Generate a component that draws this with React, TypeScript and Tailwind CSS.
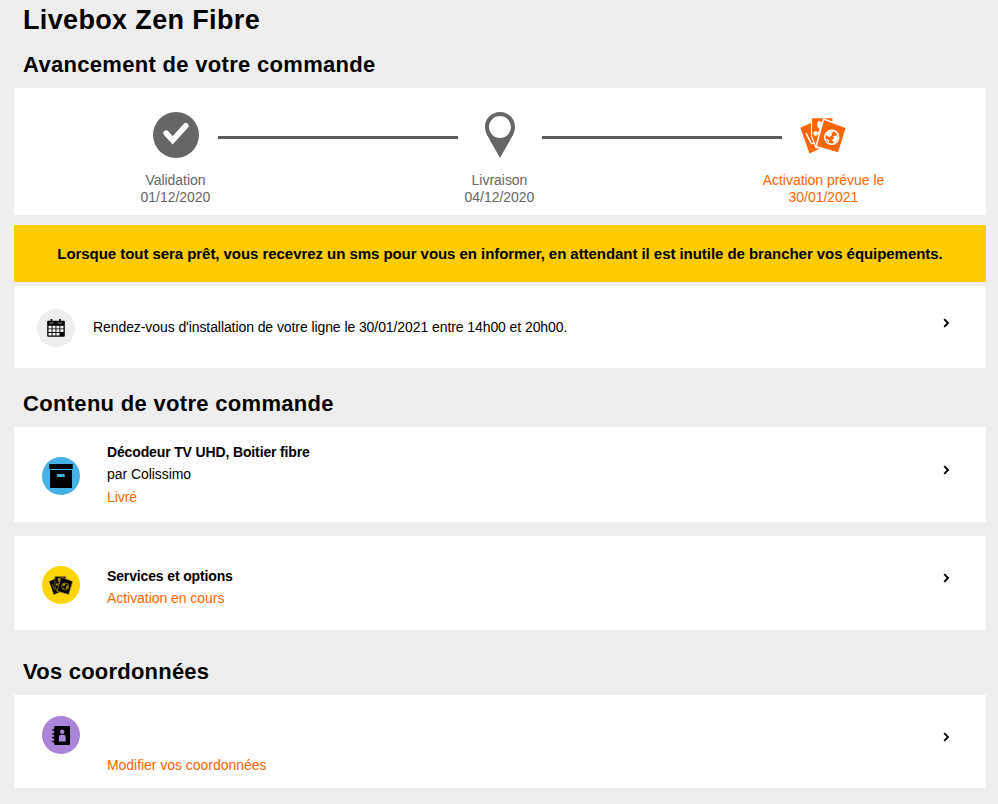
import React from 'react';

interface IconProps {
  className?: string;
}

const CheckCircleIcon: React.FC<IconProps> = ({ className }) => (
  <svg className={className} viewBox="0 0 46 46" fill="none">
    <circle cx="23" cy="23" r="23" fill="#666666" />
    <path
      d="M13.2 21.2L19.6 28.4L32.8 13.800"
      stroke="#ffffff"
      strokeWidth="5.600"
      strokeLinecap="round"
      strokeLinejoin="miter"
    />
  </svg>
);

const PinIcon: React.FC<IconProps> = ({ className }) => (
  <svg className={className} viewBox="0 0 30 46">
    <path
      fill="#666666"
      fillRule="evenodd"
      d="M15 0C6.7 0 0 6.6 0 14.8C0 18.5 1.3 21.7 3 24.8L15 46L27 24.8C28.700 21.7 30 18.5 30 14.8C30 6.600 23.300 0 15 0ZM15 4A11 11 0 1 1 15 26A11 11 0 1 1 15 4Z"
    />
  </svg>
);

// Three fanned cards: laptop, phone and globe
const CardsIcon: React.FC<IconProps & { gap: string }> = ({ className, gap }) => (
  <svg className={className} viewBox="0 0 47 37">
    <g fill="currentColor">
      <path d="M0.300 10.800L12 5.500L20 31.500L9.500 36.500Z" />
      <path
        d="M6 16L11 25.800Q12 27.500 16 25.500M12 12.500V15"
        fill="none"
        stroke={gap}
        strokeWidth="1.500"
      />
      <path d="M11.500 0.700H33V31H16L11.500 19Z" stroke={gap} strokeWidth="1.200" />
      <path
        d="M19.500 4C18.300 7.500 19 10.500 20.500 12C20.500 14.500 18 16.500 15.500 17"
        fill="none"
        stroke={gap}
        strokeWidth="1.800"
      />
      <ellipse cx="19.600" cy="7.800" rx="2.400" ry="3.400" fill={gap} />
      <ellipse cx="15.600" cy="16.500" rx="2.200" ry="2.400" fill={gap} />
      <path d="M23.500 2L46.500 10.500L38.500 36.300L16 29.500Z" stroke={gap} strokeWidth="1.500" />
      <circle cx="31.700" cy="20.300" r="7" fill="none" stroke={gap} strokeWidth="1.500" />
      <path
        d="M25.500 17.500L28.500 14.500L34 14.200L31.500 16.500L32 18L29.500 20L28 19.500ZM33 19.500L37.500 18L38 22L35 25.700L31.500 23.500L34 21.500ZM26 21.500L29.500 23.500L28.500 25.500Z"
        fill={gap}
      />
    </g>
  </svg>
);

const CalendarIcon: React.FC<IconProps> = ({ className }) => (
  <svg className={className} viewBox="0 0 18 18">
    <rect x="0.200" y="1.800" width="17.600" height="16" rx="1" fill="#000000" />
    <path d="M4.500 0V4M12.900 0V4" stroke="#000000" strokeWidth="1.600" />
    <path d="M3 3V4.300H6V3M11.400 3V4.300H14.400V3" stroke="#aaaaaa" strokeWidth="0.700" fill="none" />
    <g fill="#f4f4f4">
      <path d="M1.500 6.800H4.600V9.500H1.500ZM5.500 6.800H8.500V9.500H5.500ZM9.400 6.800H12.400V9.500H9.400ZM13.300 6.800H16.500V9.500H13.300Z" />
      <path d="M1.500 10.300H4.600V13H1.500ZM5.500 10.300H8.500V13H5.500ZM9.400 10.300H12.400V13H9.400ZM13.300 10.300H16.500V13H13.300Z" />
      <path d="M1.500 13.900H4.600V16.600H1.500ZM5.500 13.900H8.500V16.600H5.500ZM9.400 13.900H12.400V16.600H9.400Z" />
    </g>
  </svg>
);

const BoxIcon: React.FC<IconProps> = ({ className }) => (
  <svg className={className} viewBox="0 0 24 24">
    <path d="M0.300 0H23.700V5H0.300ZM1 6H23V24H1Z" fill="#000000" />
    <rect x="7.800" y="10" width="8" height="3" rx="1" fill="#46b1e4" />
  </svg>
);

const ContactIcon: React.FC<IconProps> = ({ className }) => (
  <svg className={className} viewBox="0 0 18 19">
    <rect x="2.200" y="0" width="15.800" height="19" rx="1" fill="#000000" />
    <path
      d="M1 4H4M1 8H4M1 11.700H4M1 15.500H4"
      stroke="#000000"
      strokeWidth="1.700"
      strokeLinecap="round"
    />
    <circle cx="10.200" cy="5.700" r="2.200" fill="#a885d8" />
    <path d="M6.800 15.500V11.500Q6.800 8.700 9 8.700H11.600Q13.700 8.700 13.700 11.500V15.500Z" fill="#a885d8" />
  </svg>
);

const Chevron: React.FC<IconProps> = ({ className = '' }) => (
  <svg className={`h-[10px] w-[7px] shrink-0 ${className}`} viewBox="0 0 7 10" fill="none">
    <path d="M1.200 1.200L5 5L1.200 8.800" stroke="#000000" strokeWidth="1.900" />
  </svg>
);

interface StepProps {
  icon: React.ReactNode;
  label: string;
  date: string;
  className?: string;
}

const Step: React.FC<StepProps> = ({ icon, label, date, className = 'text-[#666666]' }) => (
  <div className={`flex w-[84px] shrink-0 flex-col items-center ${className}`}>
    <div className="flex h-[46px] items-center">{icon}</div>
    <div className="mt-[14px] text-center text-[14px] leading-[17px] tracking-[-0.030px] whitespace-nowrap">
      <p>{label}</p>
      <p>{date}</p>
    </div>
  </div>
);

const StepLine = () => <div className="mt-[24px] h-[3px] w-[240px] shrink-0 bg-[#5c5c5c]" />;

const App: React.FC = () => {
  return (
    <main className="h-[804px] w-[998px] overflow-hidden bg-[#eeeeee] pr-[12px] pl-[14px] font-['Liberation_Sans',Arial,sans-serif] text-black">
      <h1 className="h-[50px] pt-[4px] pl-[9px] text-[27px] leading-[32px] font-bold tracking-[0.350px]">
        Livebox Zen Fibre
      </h1>

      {/* Order progress */}
      <h2 className="h-[38px] pl-[9px] text-[22px] leading-[30px] font-bold tracking-[0.310px]">
        Avancement de votre commande
      </h2>
      <section className="flex h-[127px] bg-white pt-[24px] pl-[119.500px]">
        <Step
          icon={<CheckCircleIcon className="h-[46px] w-[46px]" />}
          label="Validation"
          date="01/12/2020"
        />
        <StepLine />
        <Step icon={<PinIcon className="h-[46px] w-[30px]" />} label="Livraison" date="04/12/2020" />
        <StepLine />
        <Step
          icon={<CardsIcon className="h-[37px] w-[47px]" gap="#ffffff" />}
          label="Activation prévue le"
          date="30/01/2021"
          className="text-[#ff6600]"
        />
      </section>

      <div className="mt-[10px] flex h-[57px] items-center justify-center bg-[#fccc00] pt-[2px] text-[15px] font-bold tracking-[-0.053px] whitespace-nowrap">
        Lorsque tout sera prêt, vous recevrez un sms pour vous en informer, en attendant il est inutile de brancher vos équipements.
      </div>

      <section className="mt-[4px] flex h-[82px] items-center bg-white pr-[36px] pl-[23px]">
        <div className="mt-[2px] flex h-[38px] w-[38px] items-center justify-center rounded-full bg-[#eeeeee]">
          <CalendarIcon className="h-[18px] w-[18px]" />
        </div>
        <p className="ml-[18px] flex-1 text-[14px] tracking-[-0.082px]">
          Rendez-vous d'installation de votre ligne le 30/01/2021 entre 14h00 et 20h00.
        </p>
        <Chevron className="-mt-[9px]" />
      </section>

      {/* Order content */}
      <h2 className="mt-[21px] h-[38px] pl-[9px] text-[22px] leading-[30px] font-bold tracking-[0.310px]">
        Contenu de votre commande
      </h2>
      <section className="flex h-[95px] items-center bg-white pr-[36px] pl-[28px]">
        <div className="mt-[2px] flex h-[38px] w-[38px] items-center justify-center rounded-full bg-[#46b1e4]">
          <BoxIcon className="h-[24px] w-[24px]" />
        </div>
        <div className="ml-[27px] flex-1 text-[14px] leading-[22.500px] tracking-[-0.060px]">
          <p className="font-bold tracking-[-0.140px]">Décodeur TV UHD, Boitier fibre</p>
          <p>par Colissimo</p>
          <p className="text-[#ff6600]">Livré</p>
        </div>
        <Chevron className="-mt-[9px]" />
      </section>

      <section className="mt-[14px] flex h-[94px] items-center bg-white pr-[36px] pl-[28px]">
        <div className="mt-[4px] flex h-[38px] w-[38px] items-center justify-center rounded-full bg-[#ffd500]">
          <CardsIcon className="h-[19px] w-[24px] text-black" gap="#a88c00" />
        </div>
        <div className="mt-[8px] ml-[27px] flex-1 text-[14px] leading-[22.500px] tracking-[-0.050px]">
          <p className="font-bold tracking-[-0.140px]">Services et options</p>
          <p className="text-[#ff6600]">Activation en cours</p>
        </div>
        <Chevron className="-mt-[10px]" />
      </section>

      {/* Contact details */}
      <h2 className="mt-[27px] h-[38px] pl-[9px] text-[22px] leading-[30px] font-bold tracking-[0.220px]">
        Vos coordonnées
      </h2>
      <section className="flex h-[93px] items-center bg-white pr-[36px] pl-[28px]">
        <div className="-mt-[13px] flex h-[38px] w-[38px] items-center justify-center rounded-full bg-[#a885d8]">
          <ContactIcon className="h-[19px] w-[18px]" />
        </div>
        <p className="mt-[48px] ml-[27px] flex-1 text-[14px] tracking-[-0.040px] text-[#ff6600]">
          Modifier vos coordonnées
        </p>
        <Chevron className="-mt-[9px]" />
      </section>
    </main>
  );
};

export default App;
